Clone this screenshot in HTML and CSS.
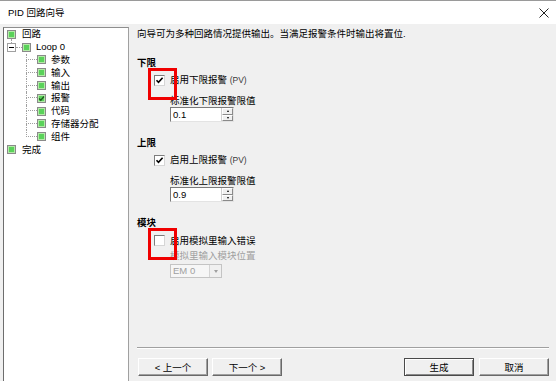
FILE: index.html
```html
<!DOCTYPE html>
<html lang="zh">
<head>
<meta charset="utf-8">
<title>PID 回路向导</title>
<link rel="stylesheet" href="styles.css">
</head>
<body>
<div class="window">
  <div class="titlebar">
    <span class="title">PID 回路向导</span>
    <svg class="close" width="10" height="10" viewBox="0 0 10 10"><path d="M0.5 0.5 L9.5 9.5 M9.5 0.5 L0.5 9.5" stroke="#222" stroke-width="1" fill="none"/></svg>
  </div>
  <div class="main">
    <div class="tree">
      <div class="row root"><span class="ico"></span><span class="txt">回路</span></div>
      <div class="row loop"><span class="exp"></span><span class="hdots"></span><span class="ico"></span><span class="txt loop-txt">Loop 0</span></div>
      <div class="row child"><span class="branch"></span><span class="ico"></span><span class="txt">参数</span></div>
      <div class="row child"><span class="branch"></span><span class="ico"></span><span class="txt">输入</span></div>
      <div class="row child"><span class="branch"></span><span class="ico"></span><span class="txt">输出</span></div>
      <div class="row child"><span class="branch"></span><span class="ico checked"><svg width="7" height="7" viewBox="0 0 7 7"><path d="M1 3.5 L2.8 5.2 L6 1.5" stroke="#1d5a1d" stroke-width="1.3" fill="none"/></svg></span><span class="txt">报警</span></div>
      <div class="row child"><span class="branch"></span><span class="ico"></span><span class="txt">代码</span></div>
      <div class="row child"><span class="branch"></span><span class="ico"></span><span class="txt">存储器分配</span></div>
      <div class="row child"><span class="branch last"></span><span class="ico"></span><span class="txt">组件</span></div>
      <div class="row root"><span class="ico"></span><span class="txt">完成</span></div>
    </div>
    <div class="content">
      <p class="intro">向导可为多种回路情况提供输出。当满足报警条件时输出将置位.</p>

      <div class="heading first">下限</div>
      <div class="check-row">
        <span class="cb marked"><svg width="9" height="9" viewBox="0 0 9 9"><path d="M1.5 4.3 L3.5 6.4 L7.6 1.8" stroke="#000" stroke-width="1.6" fill="none"/></svg></span>
        <span class="cb-label">启用下限报警 <span class="pv">(PV)</span></span>
      </div>
      <div class="field-label">标准化下限报警限值</div>
      <div class="spin"><span class="val">0.1</span><span class="btns"><span class="sb"><i class="up"></i></span><span class="sb"><i class="down"></i></span></span></div>

      <div class="heading">上限</div>
      <div class="check-row">
        <span class="cb"><svg width="9" height="9" viewBox="0 0 9 9"><path d="M1.5 4.3 L3.5 6.4 L7.6 1.8" stroke="#000" stroke-width="1.6" fill="none"/></svg></span>
        <span class="cb-label">启用上限报警 <span class="pv">(PV)</span></span>
      </div>
      <div class="field-label">标准化上限报警限值</div>
      <div class="spin"><span class="val">0.9</span><span class="btns"><span class="sb"><i class="up"></i></span><span class="sb"><i class="down"></i></span></span></div>

      <div class="heading">模块</div>
      <div class="check-row">
        <span class="cb marked"></span>
        <span class="cb-label">启用模拟里输入错误</span>
      </div>
      <div class="field-label disabled tight">模拟里输入模块位置</div>
      <div class="combo"><span class="combo-val">EM 0</span><span class="combo-btn"><i class="tri"></i></span></div>

      <div class="footer">
        <div class="btn-group">
          <button class="btn">&lt; 上一个</button>
          <button class="btn">下一个 &gt;</button>
        </div>
        <div class="btn-group right">
          <button class="btn default">生成</button>
          <button class="btn">取消</button>
        </div>
      </div>
    </div>
  </div>
</div>
</body>
</html>
```

FILE: styles.css
```css
* { box-sizing: border-box; }
html, body { margin: 0; padding: 0; background: #fff; }
body {
  font-family: "Liberation Sans", "Noto Sans CJK SC", sans-serif;
  font-size: 9.5px;
  color: #000;
}
.window {
  width: 556px;
  height: 381px;
  background: #f0f0f0;
  display: flex;
  flex-direction: column;
}
.titlebar {
  height: 24px;
  flex: none;
  background: #fff;
  border-top: 1px solid #9a9a9a;
  display: flex;
  align-items: center;
  justify-content: space-between;
  padding: 0 7px 0 8px;
}
.title { line-height: 13px; }
.close { display: block; }

.main {
  flex: 1;
  display: flex;
  padding: 3px 0 0 3px;
  min-height: 0;
}

/* tree */
.tree {
  width: 126px;
  flex: none;
  background: #fff;
  border-left: 1px solid #6d6d6d;
  border-top: 1px solid #8e8e8e;
  border-right: 1px solid #a0a0a0;
}
.row {
  height: 12.8px;
  display: flex;
  align-items: center;
  white-space: nowrap;
}
.root { padding-left: 3px; }
.root .txt { margin-left: 6px; }
.loop { padding-left: 3px; }
.child { padding-left: 22px; }
.txt { margin-left: 5px; line-height: 12px; }
.loop-txt { margin-left: 5px; }
.ico {
  width: 9px;
  height: 9px;
  flex: none;
  border: 1px solid #8a8a8a;
  background: #5ad25a;
  box-shadow: inset 0 0 0 1px #b4eaa8;
  display: flex;
  align-items: center;
  justify-content: center;
}
.ico svg { display: block; }
.exp {
  width: 9px;
  height: 9px;
  flex: none;
  border: 1px solid #a0a0a0;
  background: #fff;
  position: relative;
  display: flex;
  align-items: center;
  justify-content: center;
}
.exp::after {
  content: "";
  width: 5px;
  height: 1px;
  background: #000;
}
.exp::before {
  content: "";
  position: absolute;
  left: 3px;
  top: -5px;
  height: 4px;
  border-left: 1px dotted #a0a0a0;
}
.hdots {
  width: 6px;
  flex: none;
  border-top: 1px dotted #a0a0a0;
}
.branch {
  width: 11px;
  flex: none;
  align-self: stretch;
  display: grid;
  grid-template-rows: 1fr 1fr;
}
.branch::before {
  content: "";
  border-left: 1px dotted #a0a0a0;
  border-bottom: 1px dotted #a0a0a0;
}
.branch::after {
  content: "";
  border-left: 1px dotted #a0a0a0;
}
.branch.last::after { border-left: none; }

/* content */
.content {
  flex: 1;
  display: flex;
  flex-direction: column;
  padding: 0 7px 0 8px;
}
.intro { margin: 0; line-height: 13px; }
.heading {
  font-weight: bold;
  line-height: 13px;
  margin-top: 14px;
}
.heading.first { margin-top: 16px; }
.check-row {
  margin-top: 4px;
  height: 14px;
  display: flex;
  align-items: center;
}
.cb {
  width: 11px;
  height: 11px;
  flex: none;
  margin-left: 17px;
  background: #fff;
  border: 1px solid;
  border-color: #7d7d7d #d6d6d6 #d6d6d6 #7d7d7d;
  position: relative;
  display: flex;
  align-items: center;
  justify-content: center;
}
.cb svg { display: block; }
.cb.marked::after {
  content: "";
  position: absolute;
  left: -7px;
  top: -8px;
  width: 23px;
  height: 26px;
  border: 3px solid #f00000;
}
.cb-label { margin-left: 5px; line-height: 13px; }
.pv { font-size: 8.5px; color: #3a3a3a; }
.field-label {
  margin-top: 7px;
  margin-left: 33px;
  line-height: 13px;
}
.field-label.tight { margin-top: 2px; }
.disabled { color: #a0a0a0; }

.spin {
  margin-left: 33px;
  width: 64px;
  height: 15px;
  display: flex;
  border: 1px solid;
  border-color: #7a7a7a #e3e3e3 #e3e3e3 #7a7a7a;
  background: #fff;
}
.spin .val {
  flex: 1;
  padding-left: 2px;
  line-height: 13px;
}
.btns {
  width: 12px;
  display: flex;
  flex-direction: column;
  border-left: 1px solid #d0d0d0;
}
.sb {
  flex: 1;
  background: #f0f0f0;
  border: 1px solid;
  border-color: #fff #8a8a8a #8a8a8a #fff;
  display: flex;
  align-items: center;
  justify-content: center;
}
.up, .down {
  width: 0;
  height: 0;
  border-left: 1.5px solid transparent;
  border-right: 1.5px solid transparent;
}
.up { border-bottom: 2px solid #000; }
.down { border-top: 2px solid #000; }

.combo {
  margin-top: 2px;
  margin-left: 33px;
  width: 52px;
  height: 14px;
  display: flex;
  border: 1px solid #c4c4c4;
  background: #f6f6f6;
}
.combo-val {
  flex: 1;
  color: #a0a0a0;
  padding-left: 2px;
  line-height: 12px;
}
.combo-btn {
  width: 12px;
  border-left: 1px solid #d4d4d4;
  background: #f0f0f0;
  display: flex;
  align-items: center;
  justify-content: center;
}
.tri {
  width: 0;
  height: 0;
  border-left: 2.5px solid transparent;
  border-right: 2.5px solid transparent;
  border-top: 3px solid #a0a0a0;
}

.footer {
  margin-top: auto;
  border-top: 1px solid #a0a0a0;
  box-shadow: inset 0 1px #fff;
  padding: 10px 0 5px 1px;
  display: flex;
  justify-content: space-between;
}
.btn-group { display: flex; gap: 4px; }
.btn-group.right { gap: 5px; }
.btn {
  width: 70px;
  height: 18px;
  padding: 0;
  margin: 0;
  font: inherit;
  color: #000;
  background: #f0f0f0;
  border: 1px solid;
  border-color: #fff #696969 #696969 #fff;
  box-shadow: inset -1px -1px #a0a0a0;
  display: flex;
  align-items: center;
  justify-content: center;
  line-height: 13px;
}
.btn.default {
  border-color: #4a4a4a;
  box-shadow: inset 1px 1px #fff, inset -1px -1px #8a8a8a;
}
```
